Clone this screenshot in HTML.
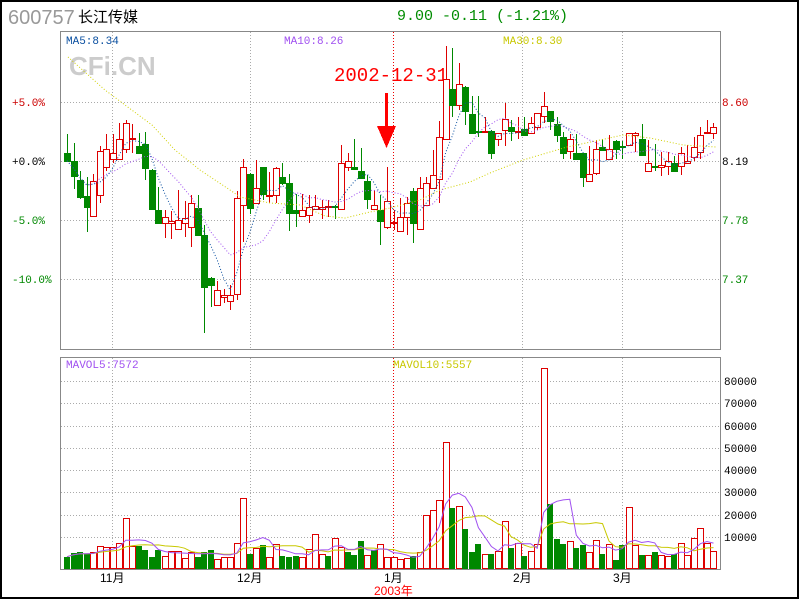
<!DOCTYPE html>
<html><head><meta charset="utf-8">
<style>
html,body{margin:0;padding:0;background:#fff;}
svg{display:block;}
text{font-family:"Liberation Mono","DejaVu Sans Mono",monospace;}
</style></head><body>
<svg id="s" width="800" height="600" xmlns="http://www.w3.org/2000/svg" shape-rendering="crispEdges">
<rect x="1" y="1" width="797" height="597" fill="#fff" stroke="#000" stroke-width="2"/>
<text x="8" y="24" style="font-family:'Liberation Sans',sans-serif" font-size="20" fill="#999">600757</text>
<text x="78" y="22" style="font-family:'Liberation Sans','Noto Sans CJK SC',sans-serif" font-size="15" fill="#000">长江传媒</text>
<text x="397" y="20" font-size="15" fill="#008c00">9.00 -0.11 (-1.21%)</text>
<g id="grid" stroke="#aaa" stroke-dasharray="1,2" stroke-width="1"></g>
<rect x="60.5" y="31.5" width="660" height="318" fill="none" stroke="#888"/>
<rect x="60.5" y="357.5" width="660" height="212" fill="none" stroke="#888"/>
<text x="66" y="44" font-size="11" fill="#0a4fa0">MA5:8.34</text>
<text x="284" y="44" font-size="11" fill="#a050f0">MA10:8.26</text>
<text x="503" y="44" font-size="11" fill="#c8c800">MA30:8.30</text>
<text x="66" y="368" font-size="11" fill="#a050f0">MAVOL5:7572</text>
<text x="393" y="368" font-size="11" fill="#c8c800">MAVOL10:5557</text>
<text x="69" y="75" style="font-family:'Liberation Sans',sans-serif;font-weight:bold" font-size="26" fill="#ccc">CFi.CN</text>
<text x="334" y="81" font-size="19" fill="#f00">2002-12-31</text>
<rect x="385" y="93" width="3" height="38" fill="#f00"/>
<polygon points="377,126 396,126 386.5,148" fill="#f00"/>
<g font-size="11">
<text x="12" y="106" fill="#c00">+5.0%</text>
<text x="12" y="165" fill="#000">+0.0%</text>
<text x="12" y="224" fill="#080">-5.0%</text>
<text x="12" y="283" fill="#080">-10.0%</text>
<text x="722" y="106" fill="#c00">8.60</text>
<text x="722" y="165" fill="#000">8.19</text>
<text x="722" y="224" fill="#080">7.78</text>
<text x="722" y="283" fill="#080">7.37</text>
<text x="724" y="385" fill="#000">80000</text>
<text x="724" y="407" fill="#000">70000</text>
<text x="724" y="430" fill="#000">60000</text>
<text x="724" y="452" fill="#000">50000</text>
<text x="724" y="474" fill="#000">40000</text>
<text x="724" y="496" fill="#000">30000</text>
<text x="724" y="519" fill="#000">20000</text>
<text x="724" y="541" fill="#000">10000</text>
</g>
<g style="font-family:'Liberation Sans','Noto Sans CJK SC',sans-serif" font-size="12" fill="#000">
<text x="100" y="582" style="font-family:'Liberation Sans','Noto Sans CJK SC',sans-serif">11月</text>
<text x="237" y="582" style="font-family:'Liberation Sans','Noto Sans CJK SC',sans-serif">12月</text>
<text x="384" y="582" style="font-family:'Liberation Sans','Noto Sans CJK SC',sans-serif">1月</text>
<text x="513" y="582" style="font-family:'Liberation Sans','Noto Sans CJK SC',sans-serif">2月</text>
<text x="613" y="582" style="font-family:'Liberation Sans','Noto Sans CJK SC',sans-serif">3月</text>
<text x="374" y="595" fill="#f00" style="font-family:'Liberation Sans','Noto Sans CJK SC',sans-serif">2003年</text>
</g>
<g id="c"></g>
</svg>
<script>
var NS="http://www.w3.org/2000/svg",c=document.getElementById('c'),g=document.getElementById('grid');
function el(t,a,p){var e=document.createElementNS(NS,t);for(var k in a)e.setAttribute(k,a[k]);(p||c).appendChild(e);return e;}
[102,161,220,279].forEach(function(y){el('line',{x1:61,x2:720,y1:y+.5,y2:y+.5},g)});
[381,403,426,448,470,492,515,537].forEach(function(y){el('line',{x1:61,x2:720,y1:y+.5,y2:y+.5},g)});
[112,250,522,622].forEach(function(x){el('line',{x1:x+.5,x2:x+.5,y1:32,y2:349},g);el('line',{x1:x+.5,x2:x+.5,y1:358,y2:569},g)});
el('line',{x1:393.5,x2:393.5,y1:32,y2:349,stroke:'#e00','stroke-dasharray':'1,2'});
el('line',{x1:393.5,x2:393.5,y1:358,y2:569,stroke:'#e00','stroke-dasharray':'1,2'});
var A=[['g',188,212,132,215],['g',212,257,158,297],['g',270,320,242,326],['g',318,350,262,425],['r',274,378,252,380],['r',184,316,168,340],['r',178,230,132,242],['r',190,206,132,218],['r',148,206,100,210],['r',100,176,90,188],['r',145,148,102,188],['g',168,188,128,190],['g',162,234,126,270],['g',240,358,236,360],['g',360,398,290,400],['r',382,400,360,444],['r',394,398,362,446],['r',390,418,300,420],['r',385,400,334,440],['r',340,410,316,470],['g',354,434,316,436],['g',434,590,404,730],['g',564,584,560,650],['r',600,644,574,646],['r',616,622,598,640],['r',616,632,586,660],['r',324,612,302,630],['r',232,346,208,455],['g',252,354,250,372],['r',294,340,210,342],['g',232,312,230,330],['r',314,318,246,340],['r',234,316,230,340],['g',262,280,218,286],['g',280,368,252,422],['g',360,368,312,410],['r',360,378,312,380],['r',350,376,316,400],['r',348,358,316,360],['r',352,358,330,386],['r',348,352,330,380],['g',348,352,346,388],['r',220,358,164,360],['r',214,230,188,242],['g',232,238,146,240],['g',244,264,174,266],['g',272,328,254,358],['r',344,358,300,360],['g',360,392,316,466],['r',334,412,232,416]];
var B=[['r',546,549,510,570],['r',532,572,474,576],['r',490,532,470,586],['g',454,550,444,608],['r',444,568,410,570],['r',430,494,412,496],['r',404,444,330,446],['r',290,418,242,488],['r',118,296,18,298],['g',148,196,24,230],['r',132,196,70,210],['g',142,212,138,254],['g',222,278,168,280],['g',272,276,168,290],['r',272,276,232,278],['g',272,338,270,358],['r',280,296,278,318],['r',238,270,190,318],['g',262,272,240,302],['r',272,276,232,296],['g',268,286,232,288],['r',250,280,232,282],['r',220,260,218,270],['r',198,228,156,250],['g',214,242,212,270],['g',252,286,230,306],['g',292,338,276,358],['r',298,332,282,358],['g',340,356,282,358],['g',340,410,338,440],['r',402,422,318,424],['r',328,400,300,404],['g',322,330,298,332],['r',328,358,284,360],['g',304,326,300,358],['g',318,320,302,356],['r',280,316,280,318],['r',280,284,276,336],['g',298,346,252,348],['r',370,392,300,396],['g',378,380,312,394],['r',374,380,336,408],['r',362,378,336,406],['g',370,392,348,394],['r',340,378,320,404],['r',362,368,316,370],['r',322,350,290,362],['r',284,336,262,358],['r',276,280,240,282],['r',262,280,248,296]];
var C=[];A.forEach(function(a){C.push([a[0],90+a[1]/3,90+a[2]/3,90+a[3]/3,90+a[4]/3])});
B.forEach(function(a){C.push([a[0],40+a[1]/3,40+a[2]/3,40+a[3]/3,40+a[4]/3])});
function X(i){return 67+6.53*i;}
var close=[];
C.forEach(function(k,i){var x=Math.round(X(i)),col=k[0]=='r'?'#d00':'#080';
 close.push(k[0]=='r'?k[1]:k[2]);
 var t=Math.round(k[1]),b=Math.round(k[2]);if(b-t<1)b=t+1;
 el('line',{x1:x+.5,x2:x+.5,y1:Math.round(k[3]),y2:Math.round(k[4]),stroke:col});
 if(k[0]=='r'){el('rect',{x:x-2.5,y:t+.5,width:6,height:b-t,fill:'#fff',stroke:col});}
 else el('rect',{x:x-3,y:t,width:7,height:b-t+1,fill:col});
});
function ma(arr,n){var p=[];for(var i=0;i<arr.length;i++){var s=0,m=0;for(var j=Math.max(0,i-n+1);j<=i;j++){s+=arr[j];m++;}p.push(X(i).toFixed(1)+','+(s/m).toFixed(1));}return p.join(' ');}
el('polyline',{points:'68,57 105,90 125,105 152,125 175,150 200,170 230,190 240,197 270,203 300,205 325,216 345,218 370,212 390,208 420,200 440,190 470,182 490,173 523,160 567,147 600,140 623,135 650,138 683,145 716,147',fill:'none',stroke:'#d0d000','stroke-dasharray':'1,2','shape-rendering':'auto'});
el('polyline',{points:ma(close,10),fill:'none',stroke:'#a050f0','stroke-dasharray':'1,2','shape-rendering':'auto'});
el('polyline',{points:ma(close,5),fill:'none',stroke:'#0a4fa0','stroke-dasharray':'1,2','shape-rendering':'auto'});
var V1=[['g',651],['g',640],['g',636],['g',643],['r',637],['r',619],['r',622],['r',622],['r',610],['r',535],['r',619],['g',618],['g',630],['g',651],['g',630],['r',649],['r',634],['r',634],['r',655],['r',636],['g',651],['g',636],['g',630],['r',658],['r',652],['r',652],['r',610],['r',475],['g',642],['r',625],['g',616],['r',652],['r',613],['g',648],['g',651],['g',648],['r',652],['r',628],['r',583],['r',643],['g',648],['r',595],['r',622],['g',636],['g',645],['g',603],['r',646],['g',631],['r',613],['r',652]];
var V2=[['r',606],['r',612],['r',609],['g',602],['r',592],['r',480],['r',465],['r',436],['r',262],['g',458],['r',453],['g',521],['g',591],['g',567],['r',597],['g',597],['r',588],['r',498],['g',578],['r',563],['g',603],['r',588],['r',567],['r',40],['g',448],['g',551],['g',567],['r',559],['g',578],['g',570],['r',591],['r',556],['g',597],['r',567],['g',615],['g',570],['r',457],['r',570],['g',600],['r',600],['g',591],['r',600],['r',603],['g',597],['r',565],['r',600],['r',549],['r',520],['r',564],['r',588]];
var H=[],VC=[];V1.forEach(function(v){VC.push(v[0]);H.push((688-v[1])/3)});V2.forEach(function(v){VC.push(v[0]);H.push((642-v[1])/3)});
H.forEach(function(h,i){var x=Math.round(X(i)),t=Math.round(569-h);
 if(VC[i]=='r')el('rect',{x:x-2.5,y:t+.5,width:6,height:568-t,fill:'#fff',stroke:'#d00'});
 else el('rect',{x:x-3,y:t,width:6,height:569-t,fill:'#080'});});
function mav(n){var p=[];for(var i=0;i<H.length;i++){var s=0,m=0;for(var j=Math.max(0,i-n+1);j<=i;j++){s+=H[j];m++;}p.push(X(i).toFixed(1)+','+(569-s/m).toFixed(1));}return p.join(' ');}
el('polyline',{points:mav(10),fill:'none',stroke:'#c8c800','shape-rendering':'auto'});
el('polyline',{points:mav(5),fill:'none',stroke:'#a050f0','shape-rendering':'auto'});
</script>
</body></html>
